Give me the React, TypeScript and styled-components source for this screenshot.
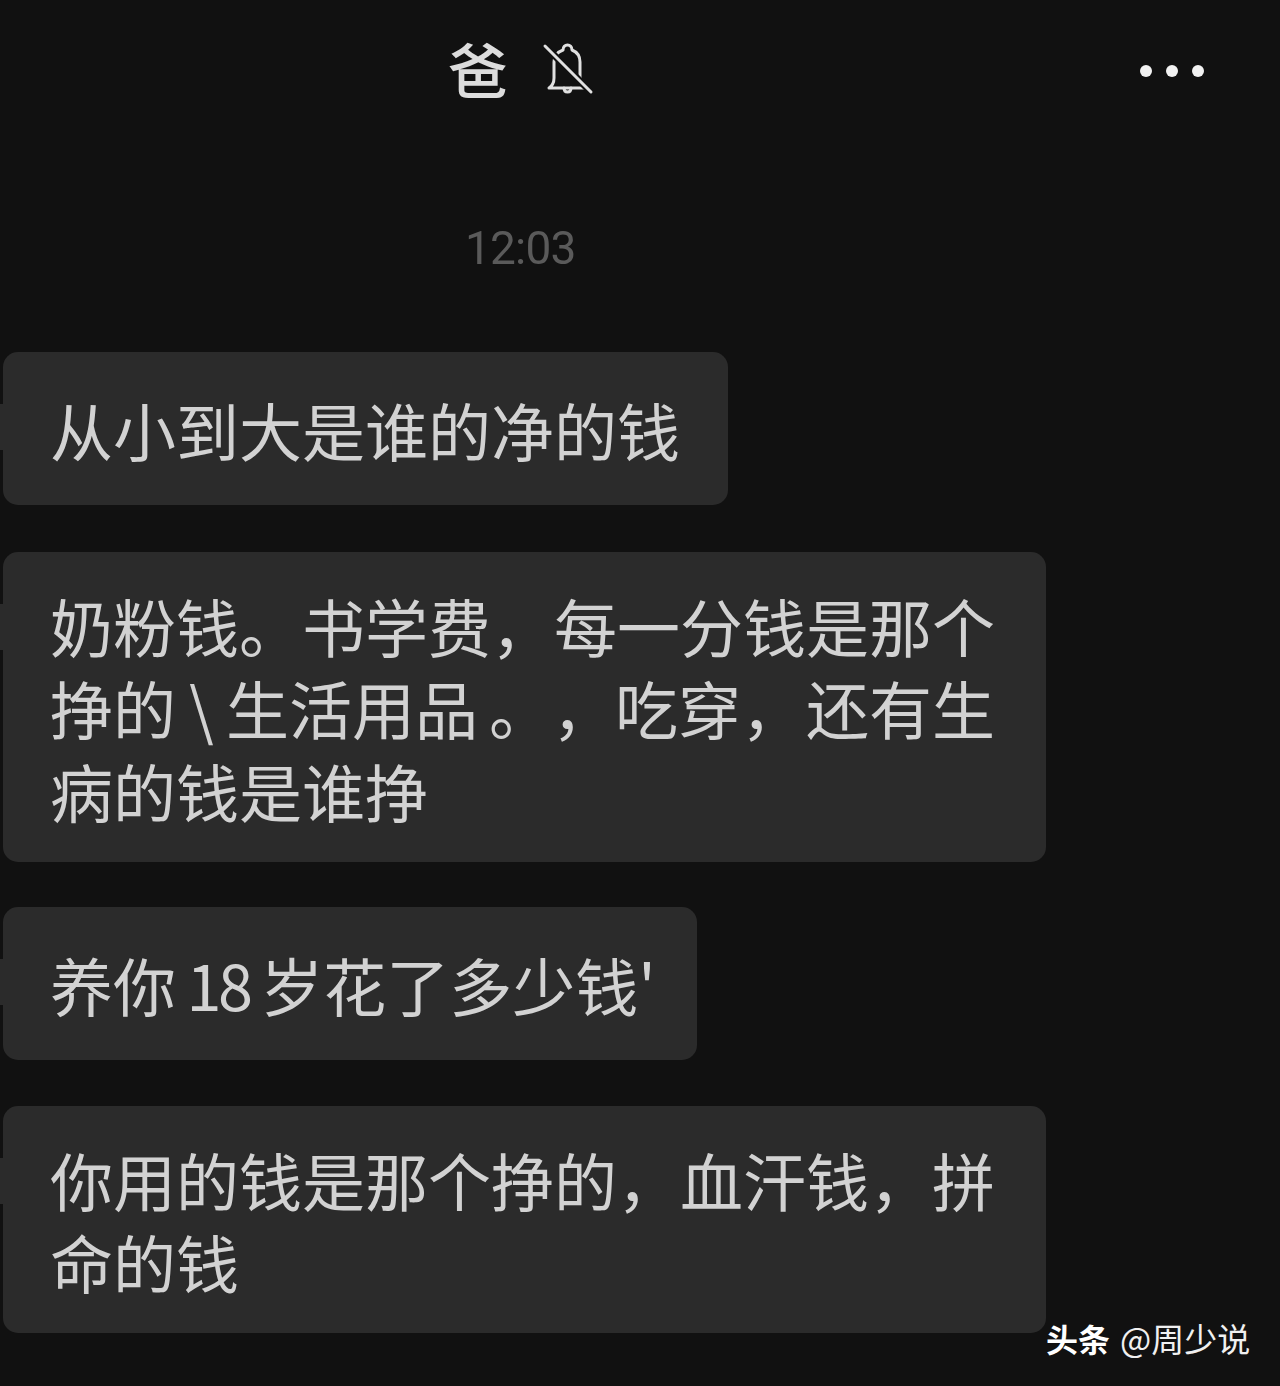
import React from "react";
import styled, { createGlobalStyle } from "styled-components";

const GlobalStyle = createGlobalStyle`
  html, body {
    margin: 0;
    padding: 0;
    background: #111111;
  }
  * {
    box-sizing: border-box;
  }
`;

const cjk = `"Noto Sans CJK SC", "Noto Sans", sans-serif`;

const Page = styled.div`
  position: relative;
  width: 1280px;
  height: 1386px;
  overflow: hidden;
  background: #111111;
  font-family: ${cjk};
`;

const Header = styled.header`
  display: flex;
  align-items: center;
  height: 140px;
  padding: 0 76px 0 448px;
`;

const Title = styled.h1`
  margin: 0 0 5px;
  font-size: 60px;
  line-height: 60px;
  font-weight: 500;
  color: #dcdcdc;
  filter: blur(0.5px);
`;

const MuteIcon = styled.svg`
  width: 52px;
  height: 56px;
  margin-left: 34px;
  margin-bottom: 2px;
  color: #e0e0e0;
  filter: blur(0.4px);
`;

const Dots = styled.div`
  display: flex;
  gap: 14px;
  margin-left: auto;
  margin-top: 2px;
`;

const Dot = styled.span`
  width: 12px;
  height: 12px;
  border-radius: 50%;
  background: #f2f2f2;
`;

const Time = styled.div`
  margin-top: 78px;
  margin-left: 465px;
  font-family: Roboto, "Liberation Sans", sans-serif;
  font-size: 46px;
  line-height: 60px;
  letter-spacing: -0.8px;
  color: #5a5a5a;
  filter: blur(0.5px);
`;

const Thread = styled.div`
  display: flex;
  flex-direction: column;
  align-items: flex-start;
  margin-top: 74px;
  padding-left: 3px;
`;

const Bubble = styled.div<{ $gap: number; $width: number; $top: number }>`
  position: relative;
  width: ${(p) => p.$width}px;
  min-height: 153px;
  margin-bottom: ${(p) => p.$gap}px;
  padding: ${(p) => p.$top}px 0 31px 47px;
  border-radius: 15px;
  background: #2b2b2b;

  &::before {
    content: "";
    position: absolute;
    left: -3px;
    top: 52px;
    width: 3px;
    height: 46px;
    background: #2b2b2b;
  }
`;

const Message = styled.p`
  margin: 0;
  font-size: 63px;
  line-height: 82.3px;
  font-weight: 400;
  color: #d2d2d2;
  white-space: nowrap;
  text-spacing-trim: space-all;
  filter: blur(0.5px);
`;

const Track = styled.span<{ $s: number }>`
  letter-spacing: ${(p) => p.$s}px;
`;

const Watermark = styled.div`
  position: absolute;
  left: 1046px;
  top: 1316px;
  display: flex;
  align-items: center;
  gap: 10px;
  font-size: 33px;
  line-height: 44px;
  color: #f0f0f0;
  white-space: nowrap;
`;

const Brand = styled.span`
  font-size: 32px;
  font-weight: 700;
  color: #ffffff;
`;

const messages: { width: number; gap: number; top: number; lines: React.ReactNode[] }[] = [
  { width: 725, gap: 47, top: 36, lines: ["从小到大是谁的净的钱"] },
  {
    width: 1043,
    gap: 45,
    top: 32,
    lines: [
      "奶粉钱。书学费，每一分钱是那个",
      <>
        挣的<Track $s={-1}> \ </Track>生活用<Track $s={11}>品</Track>。，吃穿<Track $s={2}>，</Track>还有生
      </>,
      "病的钱是谁挣",
    ],
  },
  {
    width: 694,
    gap: 46,
    top: 36,
    lines: [
      <>
        养你<Track $s={-3.5}> 18 </Track>岁花了多少钱'
      </>,
    ],
  },
  { width: 1043, gap: 0, top: 32, lines: ["你用的钱是那个挣的，血汗钱，拼", "命的钱"] },
];

export default function App() {
  return (
    <Page>
      <GlobalStyle />
      <Header>
        <Title>爸</Title>
        <MuteIcon viewBox="0 0 52 56" fill="none" stroke="currentColor" strokeWidth="3" strokeLinecap="round" strokeLinejoin="round">
          <path d="M21 9c0-3 2-5 4.500-5s4.500 2 4.500 5c5 2 8 6 8 12v15c0 5 2 8 6 11H7c3-2 5-5 5-10V21c0-5 3-10 9-12z" />
          <path d="M22 47c0 3 2 4 3.500 4s3.500-1 3.500-4" />
          <path d="M4 6l46 46" stroke="#111111" strokeWidth="7" />
          <path d="M3 5l46 46" />
        </MuteIcon>
        <Dots>
          <Dot />
          <Dot />
          <Dot />
        </Dots>
      </Header>
      <Time>12:03</Time>
      <Thread>
        {messages.map((m, i) => (
          <Bubble key={i} $width={m.width} $gap={m.gap} $top={m.top}>
            {m.lines.map((line, j) => (
              <Message key={j}>{line}</Message>
            ))}
          </Bubble>
        ))}
      </Thread>
      <Watermark>
        <Brand>头条</Brand>
        <span>@周少说</span>
      </Watermark>
    </Page>
  );
}
